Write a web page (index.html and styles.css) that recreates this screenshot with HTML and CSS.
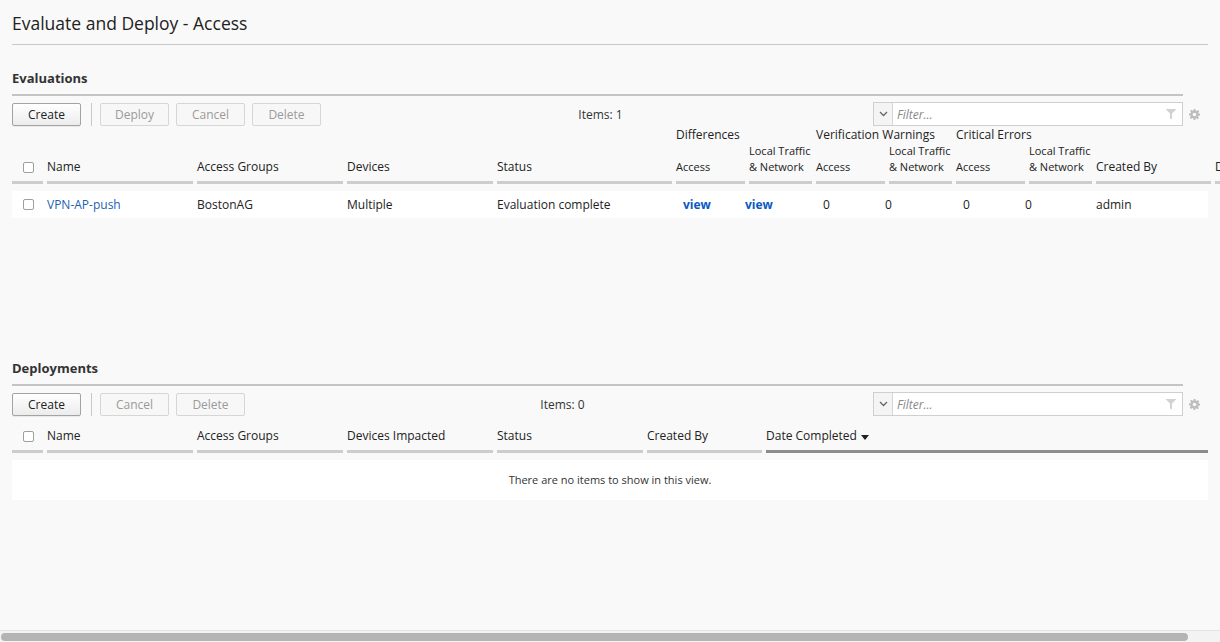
FILE: index.html
```html
<!DOCTYPE html>
<html lang="en">
<head>
  <meta charset="UTF-8" />
  <meta name="viewport" content="width=device-width, initial-scale=1.0" />
  <title>Evaluate and Deploy - Access</title>
  <link rel="stylesheet" href="styles.css">
</head>
<body>
  <header class="page-head">
    <h1 class="page-title">Evaluate and Deploy - Access</h1>
  </header>

  <!-- Evaluations -->
  <section class="panel">
    <h2 class="panel-title">Evaluations</h2>
    <div class="toolbar">
      <div class="btn-group">
        <button class="btn">Create</button>
        <span class="btn-sep"></span>
        <button class="btn" disabled>Deploy</button>
        <button class="btn" disabled>Cancel</button>
        <button class="btn" disabled>Delete</button>
      </div>
      <div class="item-count">Items: 1</div>
      <div class="filter">
        <span class="filter-drop">
          <svg width="9" height="6" viewBox="0 0 9 6"><path d="M1 1 L4.5 4.5 L8 1" fill="none" stroke="#666" stroke-width="1.3"/></svg>
        </span>
        <span class="filter-input">Filter...</span>
        <svg class="filter-icon" width="12" height="12" viewBox="0 0 12 12"><path d="M0.5 1 H11.5 L7 5.5 V11.5 L5 10.5 V5.5 Z" fill="#d2d2d2"/></svg>
      </div>
      <span class="gear">
        <svg width="11" height="11" viewBox="0 0 12 12"><path fill="#bdbdbd" d="M5 0h2l.3 1.7 1.1.5 1.4-1 1.4 1.4-1 1.4.5 1.1L12 5v2l-1.7.3-.5 1.1 1 1.4-1.4 1.4-1.4-1-1.1.5L7 12H5l-.3-1.7-1.1-.5-1.4 1-1.4-1.4 1-1.4-.5-1.1L0 7V5l1.7-.3.5-1.1-1-1.4 1.4-1.4 1.4 1 1.1-.5z"/><circle cx="6" cy="6" r="2" fill="#f9f9f9"/></svg>
      </span>
    </div>

    <div class="grid">
      <div class="thead thead-eval">
        <div class="th-group col-diff">Differences</div>
        <div class="th-group col-warn">Verification Warnings</div>
        <div class="th-group col-crit">Critical Errors</div>
        <div class="th th-check"><span class="check"></span></div>
        <div class="th">Name</div>
        <div class="th">Access Groups</div>
        <div class="th">Devices</div>
        <div class="th">Status</div>
        <div class="th th-sub">Access</div>
        <div class="th th-sub">Local Traffic<br>&amp; Network</div>
        <div class="th th-sub">Access</div>
        <div class="th th-sub">Local Traffic<br>&amp; Network</div>
        <div class="th th-sub">Access</div>
        <div class="th th-sub">Local Traffic<br>&amp; Network</div>
        <div class="th">Created By</div>
        <div class="th">Date Created</div>
      </div>
      <div class="tr tr-eval">
        <div class="td td-check"><span class="check"></span></div>
        <div class="td"><a class="link" href="#">VPN-AP-push</a></div>
        <div class="td">BostonAG</div>
        <div class="td">Multiple</div>
        <div class="td">Evaluation complete</div>
        <div class="td"><a class="view" href="#">view</a></div>
        <div class="td"><a class="view" href="#">view</a></div>
        <div class="td">0</div>
        <div class="td">0</div>
        <div class="td">0</div>
        <div class="td">0</div>
        <div class="td">admin</div>
      </div>
    </div>
  </section>

  <!-- Deployments -->
  <section class="panel panel-deploy">
    <h2 class="panel-title">Deployments</h2>
    <div class="toolbar">
      <div class="btn-group">
        <button class="btn">Create</button>
        <span class="btn-sep"></span>
        <button class="btn" disabled>Cancel</button>
        <button class="btn" disabled>Delete</button>
      </div>
      <div class="item-count">Items: 0</div>
      <div class="filter">
        <span class="filter-drop">
          <svg width="9" height="6" viewBox="0 0 9 6"><path d="M1 1 L4.5 4.5 L8 1" fill="none" stroke="#666" stroke-width="1.3"/></svg>
        </span>
        <span class="filter-input">Filter...</span>
        <svg class="filter-icon" width="12" height="12" viewBox="0 0 12 12"><path d="M0.5 1 H11.5 L7 5.5 V11.5 L5 10.5 V5.5 Z" fill="#d2d2d2"/></svg>
      </div>
      <span class="gear">
        <svg width="11" height="11" viewBox="0 0 12 12"><path fill="#bdbdbd" d="M5 0h2l.3 1.7 1.1.5 1.4-1 1.4 1.4-1 1.4.5 1.1L12 5v2l-1.7.3-.5 1.1 1 1.4-1.4 1.4-1.4-1-1.1.5L7 12H5l-.3-1.7-1.1-.5-1.4 1-1.4-1.4 1-1.4-.5-1.1L0 7V5l1.7-.3.5-1.1-1-1.4 1.4-1.4 1.4 1 1.1-.5z"/><circle cx="6" cy="6" r="2" fill="#f9f9f9"/></svg>
      </span>
    </div>

    <div class="grid">
      <div class="thead thead-deploy">
        <div class="th th-check"><span class="check"></span></div>
        <div class="th">Name</div>
        <div class="th">Access Groups</div>
        <div class="th">Devices Impacted</div>
        <div class="th">Status</div>
        <div class="th">Created By</div>
        <div class="th th-sorted">Date Completed <span class="sort-arrow"></span></div>
      </div>
      <div class="empty-row">There are no items to show in this view.</div>
    </div>
  </section>

  <div class="hscroll"><div class="hscroll-thumb"></div></div>
</body>
</html>
```

FILE: styles.css
```css
/* ==========================================================================
   Base
   ========================================================================== */
*, *::before, *::after {
  margin: 0;
  padding: 0;
  box-sizing: border-box;
}
html, body {
  overflow: hidden;
  height: 100%;
}
body {
  font-family: "Open Sans", "Liberation Sans", sans-serif;
  font-size: 12px;
  color: #222;
  background: #f9f9f9;
}
a {
  text-decoration: none;
}

/* ==========================================================================
   Page header
   ========================================================================== */
.page-head {
  margin: 0 12px;
  padding: 11px 0 9px;
  border-bottom: 1px solid #c9c9c9;
}
.page-title {
  font-size: 17.5px;
  line-height: 24px;
  font-weight: 400;
  color: #222;
}

/* ==========================================================================
   Panels
   ========================================================================== */
.panel {
  margin: 0 12px;
}
.panel-deploy {
  margin-top: 141px;
}
.panel-title {
  margin: 24px 25px 0 0;
  padding-bottom: 7px;
  font-size: 13px;
  line-height: 18px;
  font-weight: 700;
  color: #333;
  border-bottom: 2px solid #c4c4c4;
}

/* toolbar */
.toolbar {
  display: flex;
  align-items: center;
  margin-top: 6px;
  height: 24px;
}
.btn-group {
  display: flex;
  align-items: center;
  height: 24px;
}
.btn {
  width: 69px;
  height: 23px;
  margin-top: 1px;
  margin-right: 7px;
  font-family: inherit;
  font-size: 12px;
  color: #222;
  background: linear-gradient(#ffffff, #ececec);
  border: 1px solid #a3a3a3;
  border-radius: 2px;
  box-shadow: 0 1px 0 rgba(0, 0, 0, 0.06);
}
.btn:disabled {
  color: #9a9a9a;
  background: #f7f7f7;
  border-color: #d6d6d6;
  box-shadow: none;
}
.btn-sep {
  width: 1px;
  height: 23px;
  background: #c8c8c8;
  margin: 0 8px 0 3px;
}
.item-count {
  flex: 1;
  text-align: center;
  color: #333;
  line-height: 24px;
  padding-top: 1px;
}
.filter {
  display: flex;
  align-items: center;
  width: 310px;
  height: 24px;
  background: #fff;
  border: 1px solid #cfcfcf;
}
.filter-drop {
  display: flex;
  align-items: center;
  justify-content: center;
  width: 19px;
  height: 100%;
  background: #f4f4f4;
  border-right: 1px solid #d6d6d6;
}
.filter-input {
  flex: 1;
  padding-left: 4px;
  font-style: italic;
  color: #888;
}
.filter-icon {
  margin-right: 5px;
}
.gear {
  display: flex;
  align-items: center;
  width: 25px;
  padding-left: 6px;
}

/* ==========================================================================
   Grids
   ========================================================================== */
.thead {
  display: grid;
  column-gap: 4px;
}
.thead-eval {
  grid-template-columns: 31px 146px 146px 146px 175px 69px 63px 69px 63px 69px 63px 115px 120px;
}
.thead-deploy {
  grid-template-columns: 31px 146px 146px 146px 146px 115px 1fr;
  padding-top: 12px;
}
.th-group {
  grid-row: 1;
  grid-column-end: span 2;
  line-height: 17px;
  white-space: nowrap;
}
.col-diff { grid-column-start: 6; }
.col-warn { grid-column-start: 8; }
.col-crit { grid-column-start: 10; }
.thead-eval .th {
  grid-row: 2;
}
.th {
  display: flex;
  align-items: flex-end;
  padding-bottom: 6px;
  line-height: 16px;
  white-space: nowrap;
  border-bottom: 3px solid #cdcdcd;
}
.th-sub {
  font-size: 11px;
}
.th-check,
.td-check {
  padding-left: 11px;
}
.th-check .check {
  margin-bottom: 2px;
}
.th-sorted {
  border-bottom-color: #8c8c8c;
}
.sort-arrow {
  display: inline-block;
  width: 0;
  height: 0;
  margin: 0 0 4px 4px;
  border-left: 4px solid transparent;
  border-right: 4px solid transparent;
  border-top: 5px solid #222;
}

.check {
  display: inline-block;
  width: 11px;
  height: 11px;
  background: #fff;
  border: 1px solid #9e9e9e;
  border-radius: 2px;
}

.tr {
  display: grid;
  column-gap: 4px;
  align-items: center;
  height: 27px;
  margin-top: 7px;
  background: #fff;
}
.tr-eval {
  grid-template-columns: 31px 146px 146px 146px 182px 58px 74px 58px 74px 58px 67px 115px;
}
.td {
  white-space: nowrap;
  line-height: 16px;
}
.td-check .check {
  display: block;
}
.link {
  color: #1d5fb3;
}
.view {
  color: #0b58c2;
  font-weight: 700;
}

.empty-row {
  height: 40px;
  margin-top: 7px;
  background: #fff;
  font-size: 11px;
  line-height: 40px;
  text-align: center;
  color: #333;
}

/* fake overlay scrollbar */
.hscroll {
  position: fixed;
  left: 0;
  right: 0;
  bottom: 0;
  height: 12px;
  background: #f3f3f3;
  border-top: 1px solid #e4e4e4;
}
.hscroll-thumb {
  position: absolute;
  left: 1px;
  top: 2px;
  width: 1187px;
  height: 8px;
  background: #b4b4b4;
  border-radius: 4px;
}
```
